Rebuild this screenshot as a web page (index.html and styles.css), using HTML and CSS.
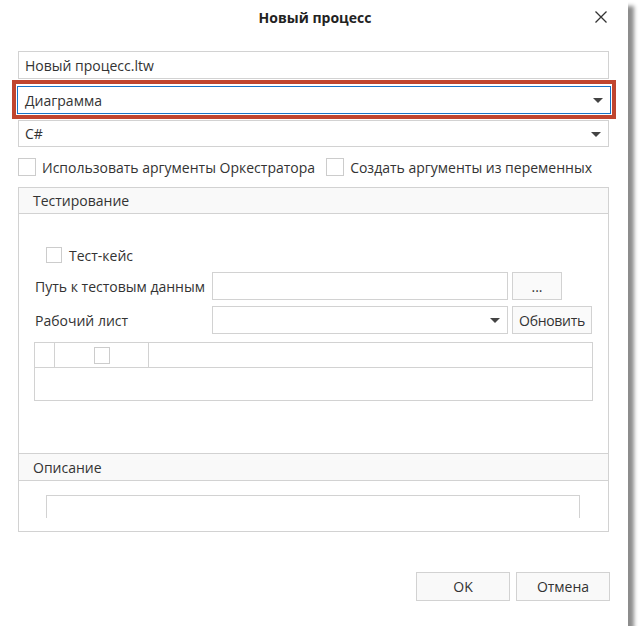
FILE: index.html
```html
<!DOCTYPE html>
<html lang="ru">
<head>
<meta charset="utf-8">
<title>Новый процесс</title>
<link rel="stylesheet" href="styles.css">
</head>
<body>
<div class="dialog">
  <div class="titlebar">
    <span class="title">Новый процесс</span>
    <span class="close"><svg width="12" height="12" viewBox="0 0 12 12"><path d="M0.5 0.5 L11.5 11.5 M11.5 0.5 L0.5 11.5" stroke="#333" stroke-width="1.3" fill="none"/></svg></span>
  </div>
  <div class="content">
    <div class="field">Новый процесс.ltw</div>
    <div class="highlight">
      <div class="field combo focused">Диаграмма<span class="arrow"></span></div>
    </div>
    <div class="field combo plain">C#<span class="arrow"></span></div>
    <div class="checks">
      <label class="check"><span class="box"></span>Использовать аргументы Оркестратора</label>
      <label class="check"><span class="box"></span>Создать аргументы из переменных</label>
    </div>
    <div class="panel">
      <div class="panel-head">Тестирование</div>
      <div class="panel-body testing">
        <label class="check small"><span class="box"></span>Тест-кейс</label>
        <div class="row row-path">
          <span class="row-label">Путь к тестовым данным</span>
          <div class="field input"></div>
          <div class="btn btn-dots">...</div>
        </div>
        <div class="row">
          <span class="row-label">Рабочий лист</span>
          <div class="field input combo"><span class="arrow"></span></div>
          <div class="btn btn-refresh">Обновить</div>
        </div>
        <div class="grid">
          <div class="grid-head">
            <div class="gcell c1"></div>
            <div class="gcell c2"><span class="box"></span></div>
            <div class="gcell c3"></div>
          </div>
          <div class="grid-row"></div>
        </div>
      </div>
      <div class="panel-head second">Описание</div>
      <div class="panel-body desc">
        <div class="textarea"></div>
      </div>
    </div>
  </div>
  <div class="footer">
    <div class="btn btn-foot">OK</div>
    <div class="btn btn-foot">Отмена</div>
  </div>
</div>
</body>
</html>
```
FILE: styles.css
```css
html, body {
  margin: 0;
  padding: 0;
  background: #ffffff;
}
body {
  font-family: "Open Sans", "Noto Sans", sans-serif;
  font-size: 14px;
  color: #333333;
}
.dialog {
  width: 628px;
  height: 626px;
  background: #ffffff;
  box-shadow: 6px 6px 4px rgba(0, 0, 0, 0.45);
  display: flex;
  flex-direction: column;
  box-sizing: border-box;
}
.titlebar {
  height: 35px;
  display: flex;
  align-items: center;
  justify-content: center;
  position: relative;
}
.title {
  font-weight: 700;
  font-size: 14px;
  color: #222222;
  padding-left: 2px;
}
.close {
  position: absolute;
  right: 21px;
  top: 11px;
  width: 12px;
  height: 12px;
  display: block;
}
.close svg { display: block; }
.content {
  padding: 16px 19px 0 18px;
  display: flex;
  flex-direction: column;
}
.field {
  height: 28px;
  box-sizing: border-box;
  border: 1px solid #d2d2d2;
  display: flex;
  align-items: center;
  padding-left: 6px;
  background: #fff;
}
.combo {
  position: relative;
}
.arrow {
  position: absolute;
  right: 7px;
  top: 50%;
  margin-top: -2px;
  width: 0;
  height: 0;
  border-left: 5px solid transparent;
  border-right: 5px solid transparent;
  border-top: 5px solid #444;
}
.highlight {
  margin: 1px -7px 0 -6px;
  border: 4px solid #c0452f;
  padding: 2px 1px 1px 1px;
}
.focused {
  border-color: #1874c8;
  padding-left: 7px;
}
.plain {
  margin-top: 1px;
  height: 27px;
}
.checks {
  margin-top: 11px;
  display: flex;
  gap: 11px;
}
.check {
  display: flex;
  align-items: center;
  height: 18px;
  font-size: 14px;
  gap: 6px;
}
.box {
  width: 18px;
  height: 18px;
  box-sizing: border-box;
  border: 1px solid #cccccc;
  background: #fff;
  flex: none;
}
.panel {
  margin-top: 11px;
  border: 1px solid #d2d2d2;
}
.panel-head {
  height: 25px;
  background: #f9f9f9;
  border-bottom: 1px solid #d2d2d2;
  display: flex;
  align-items: center;
  padding-left: 14px;
}
.panel-head.second {
  height: 26px;
  border-top: 1px solid #d2d2d2;
}
.testing {
  height: 239px;
  padding-top: 33px;
  box-sizing: border-box;
  display: flex;
  flex-direction: column;
}
.check.small {
  margin-left: 27px;
  height: 16px;
  gap: 7px;
}
.check.small .box {
  width: 16px;
  height: 16px;
}
.row {
  display: flex;
  align-items: center;
  margin-top: 6px;
  height: 28px;
}
.row-path {
  margin-top: 9px;
}
.row-label {
  width: 177px;
  padding-left: 16px;
  flex: none;
}
.input {
  width: 296px;
  flex: none;
}
.btn {
  height: 28px;
  box-sizing: border-box;
  border: 1px solid #d2d2d2;
  background: #fafafa;
  display: flex;
  align-items: center;
  justify-content: center;
}
.btn-dots {
  width: 50px;
  margin-left: 4px;
}
.btn-refresh {
  width: 80px;
  margin-left: 4px;
  letter-spacing: -0.3px;
}
.grid {
  margin: 8px 15px 0 15px;
  border: 1px solid #d2d2d2;
}
.grid-head {
  display: flex;
  height: 24px;
  border-bottom: 1px solid #d2d2d2;
}
.gcell {
  height: 24px;
  display: flex;
  align-items: center;
  justify-content: center;
}
.c1 { width: 19px; border-right: 1px solid #d2d2d2; }
.c2 { width: 93px; border-right: 1px solid #d2d2d2; }
.c3 { flex: 1; }
.c2 .box { width: 16px; height: 17px; }
.grid-row {
  height: 32px;
}
.desc {
  height: 50px;
  padding: 14px 28px 0 27px;
  box-sizing: border-box;
}
.textarea {
  height: 22px;
  border: 1px solid #d2d2d2;
  border-bottom: none;
}
.footer {
  margin-top: auto;
  margin-bottom: 25px;
  display: flex;
  justify-content: flex-end;
  gap: 6px;
  padding-right: 18px;
}
.btn-foot {
  width: 94px;
  height: 29px;
  background: #f9f9f9;
}
```
